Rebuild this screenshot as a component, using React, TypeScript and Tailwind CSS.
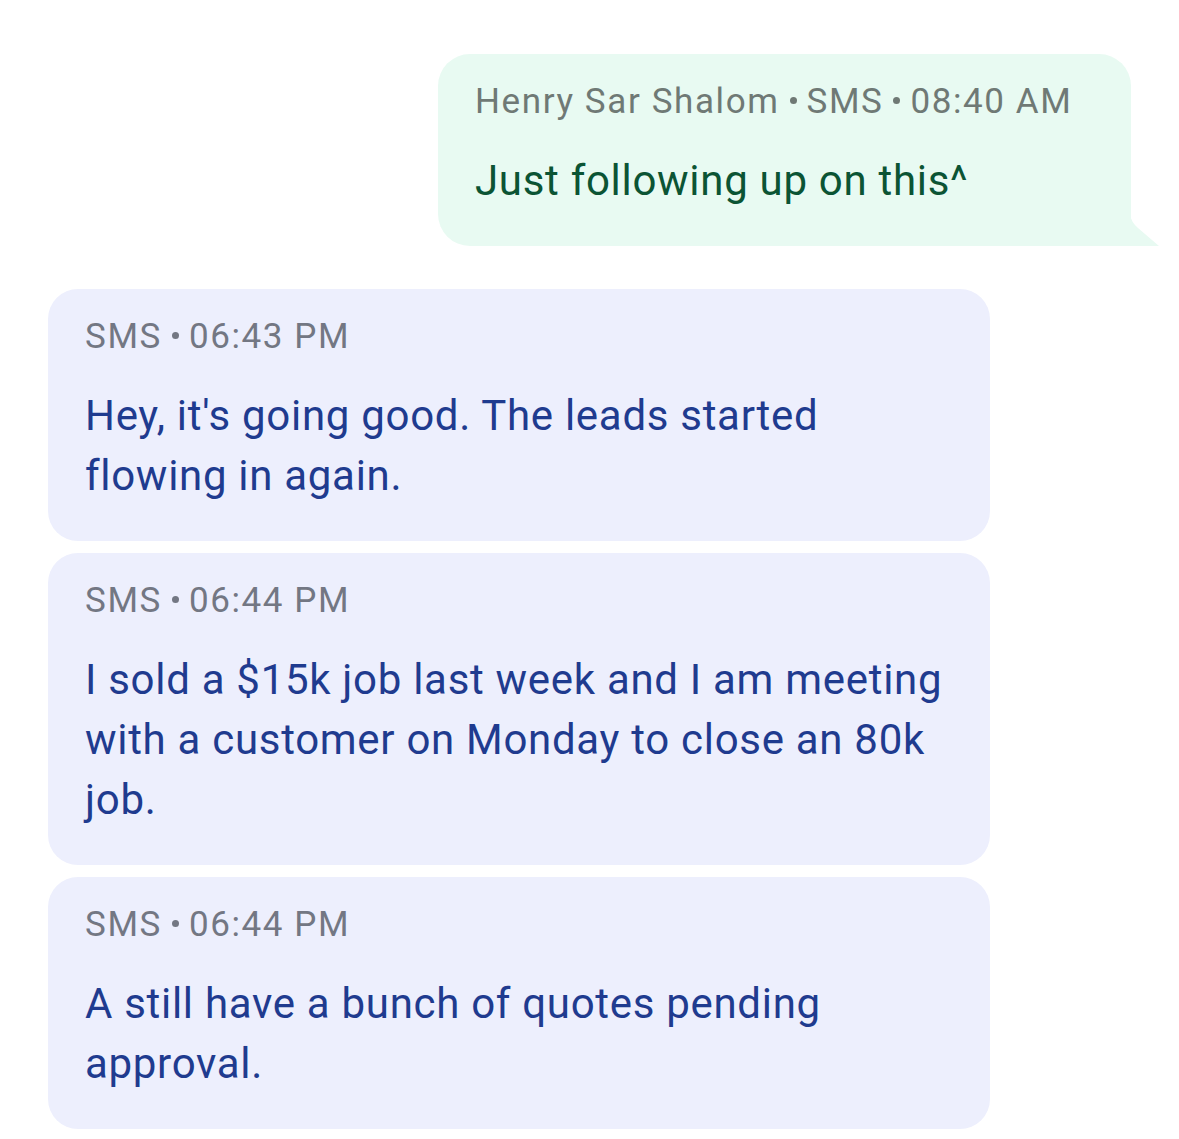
const font = { fontFamily: "Roboto, 'Noto Sans', sans-serif" };

type Msg = { meta: string; text: string };

const incoming: Msg[] = [
  { meta: "06:43 PM", text: "Hey, it's going good. The leads started flowing in again." },
  {
    meta: "06:44 PM",
    text: "I sold a $15k job last week and I am meeting with a customer on Monday to close an 80k job.",
  },
  { meta: "06:44 PM", text: "A still have a bunch of quotes pending approval." },
];

function Dot() {
  return <span className="mx-[10px] inline-block h-[7px] w-[7px] translate-y-[-9px] rounded-full bg-current" />;
}

export default function App() {
  return (
    <div className="min-h-[1139px] w-[1179px] bg-white pt-[54px]" style={font}>
      <div className="flex justify-end pr-[48px]">
        <div className="relative w-[693px] rounded-t-[32px] rounded-bl-[32px] bg-[#e8faf2] px-[37px] pb-[35px] pt-[27px]">
          <div className="text-[35px] leading-[42px] tracking-[1.6px] text-[#6f7975]">
            Henry Sar Shalom<Dot />SMS<Dot />08:40 AM
          </div>
          <div className="mt-[28px] text-[42px] leading-[60px] tracking-[0.7px] text-[#0b5434]">
            Just following up on this^
          </div>
          <svg className="absolute bottom-0 right-[-29px]" width="30" height="32" viewBox="0 0 30 32">
            <path d="M0 0 Q1 8 8 14 L29 32 L0 32 Z" fill="#e8faf2" />
          </svg>
        </div>
      </div>

      <div className="mt-[43px] flex flex-col gap-[12px] pl-[48px]">
        {incoming.map((m, i) => (
          <div key={i} className="w-[942px] rounded-[30px] bg-[#edeffd] pb-[35px] pl-[37px] pr-[40px] pt-[27px]">
            <div className="text-[35px] leading-[42px] tracking-[1.6px] text-[#737783]">
              SMS<Dot />{m.meta}
            </div>
            <div className="mt-[28px] text-[42px] leading-[60px] tracking-[0.7px] text-[#1f3b8f]">{m.text}</div>
          </div>
        ))}
      </div>
    </div>
  );
}
